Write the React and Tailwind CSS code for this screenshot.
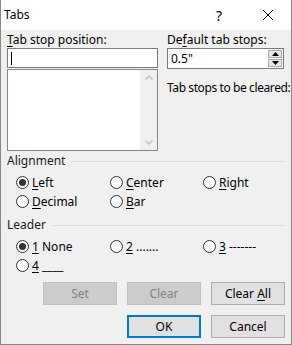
import React from 'react';

const font = { fontFamily: '"Noto Sans", "Liberation Sans", sans-serif' };

function U({ children }) {
    return <span className="underline underline-offset-2">{children}</span>;
}

function Radio({ checked, children }) {
    return (
        <div className="flex items-center h-[19px]">
            <span className="w-[13px] h-[13px] rounded-full border border-[#333] bg-white flex items-center justify-center">
                {checked && <span className="w-[7px] h-[7px] rounded-full bg-[#333]" />}
            </span>
            <span className="ml-[3px] text-[12px] text-black leading-none whitespace-nowrap">{children}</span>
        </div>
    );
}

function GroupLabel({ children }) {
    return (
        <div className="flex items-center h-[16px] pr-[6px]">
            <span className="text-[12px] text-[#1a1a1a] pr-[6px]">{children}</span>
            <div className="flex-1 h-px bg-[#dcdcdc]" />
        </div>
    );
}

function Button({ children, disabled, primary }) {
    let cls = 'w-[74px] h-[23px] text-[12px] flex items-center justify-center ';
    if (disabled) cls += 'bg-[#cccccc] border border-[#bfbfbf] text-[#838383]';
    else if (primary) cls += 'bg-[#e1e1e1] border-2 border-[#0078d7] text-black';
    else cls += 'bg-[#e1e1e1] border border-[#adadad] text-black';
    return <div className={cls}><span className="whitespace-pre">{children}</span></div>;
}

export default function App() {
    return (
        <div className="w-[292px] h-[345px] flex flex-col bg-[#f0f0f0] select-none" style={font}>
            {/* title bar */}
            <div className="h-[30px] bg-white flex items-center border-l border-r border-[#888] relative">
                <span className="ml-[3px] text-[12px] text-black">Tabs</span>
                <span className="ml-auto text-[14px] text-black mr-[40px]">?</span>
                <svg width="12" height="12" viewBox="0 0 12 12" className="mr-[17px]">
                    <path d="M1 1 L11 11 M11 1 L1 11" stroke="#000" strokeWidth="1" />
                </svg>
            </div>

            <div className="flex-1 border-l border-r border-b border-[#888] pl-[6px] flex flex-col">
                {/* top */}
                <div className="flex pt-[2px]">
                    <div className="w-[151px] flex flex-col">
                        <div className="h-[16px] text-[12px] text-black leading-[16px]"><U>T</U>ab stop position:</div>
                        <div className="h-[20px] bg-white border border-[#7a7a7a] flex items-center pl-[3px]">
                            <div className="w-px h-[13px] bg-black" />
                        </div>
                        <div className="mt-[1px] h-[82px] bg-white border border-[#828790] flex">
                            <div className="flex-1" />
                            <div className="w-[17px] bg-[#f0f0f0] flex flex-col items-center justify-between py-[5px]">
                                <svg width="8" height="5" viewBox="0 0 8 5"><path d="M0.5 4.5 L4 1 L7.5 4.5" stroke="#c4c4c4" strokeWidth="1.5" fill="none" /></svg>
                                <svg width="8" height="5" viewBox="0 0 8 5"><path d="M0.5 0.5 L4 4 L7.5 0.5" stroke="#c4c4c4" strokeWidth="1.5" fill="none" /></svg>
                            </div>
                        </div>
                    </div>
                    <div className="ml-[9px] w-[117px] flex flex-col">
                        <div className="h-[16px] text-[12px] text-black leading-[16px]">De<U>f</U>ault tab stops:</div>
                        <div className="h-[21px] bg-white border border-[#7a7a7a] flex">
                            <span className="flex-1 text-[12px] text-black pl-[3px] leading-[19px]">0.5"</span>
                            <div className="w-[16px] flex flex-col p-px gap-px">
                                <div className="flex-1 bg-[#e6e6e6] border border-[#adadad] flex items-center justify-center">
                                    <svg width="7" height="4" viewBox="0 0 7 4"><path d="M0 4 L3.5 0 L7 4 Z" fill="#000" /></svg>
                                </div>
                                <div className="flex-1 bg-[#e6e6e6] border border-[#adadad] flex items-center justify-center">
                                    <svg width="7" height="4" viewBox="0 0 7 4"><path d="M0 0 L3.5 4 L7 0 Z" fill="#000" /></svg>
                                </div>
                            </div>
                        </div>
                        <div className="mt-[11px] text-[12px] text-black leading-[16px] whitespace-nowrap tracking-[-0.4px]">Tab stops to be cleared:</div>
                    </div>
                </div>

                {/* alignment */}
                <div className="mt-[2px]"><GroupLabel>Alignment</GroupLabel></div>
                <div className="mt-[4px] pl-[9px] grid grid-cols-[94px_93px_1fr]">
                    <Radio checked><U>L</U>eft</Radio>
                    <Radio><U>C</U>enter</Radio>
                    <Radio><U>R</U>ight</Radio>
                    <Radio><U>D</U>ecimal</Radio>
                    <Radio><U>B</U>ar</Radio>
                </div>

                {/* leader */}
                <div className="mt-[6px]"><GroupLabel>Leader</GroupLabel></div>
                <div className="mt-[4px] pl-[9px] grid grid-cols-[94px_93px_1fr]">
                    <Radio checked><U>1</U> None</Radio>
                    <Radio><U>2</U> .......</Radio>
                    <Radio><U>3</U> -------</Radio>
                    <Radio><U>4</U> ____</Radio>
                </div>

                {/* buttons */}
                <div className="mt-[7px] flex justify-end gap-[10px] pr-[6px]">
                    <Button disabled>Set</Button>
                    <Button disabled>Clear</Button>
                    <Button>Clear <U>A</U>ll</Button>
                </div>
                <div className="mt-[10px] flex justify-end gap-[10px] pr-[6px]">
                    <Button primary>OK</Button>
                    <Button>Cancel</Button>
                </div>
            </div>
        </div>
    );
}
